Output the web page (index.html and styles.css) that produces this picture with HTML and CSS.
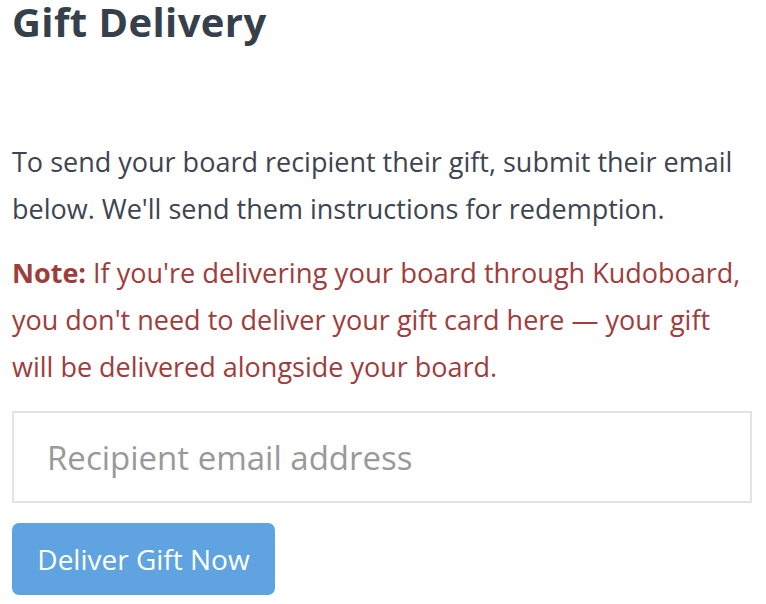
FILE: index.html
```html
<!DOCTYPE html>
<html>
<head>
<meta charset="utf-8">
<link rel="stylesheet" href="styles.css">
</head>
<body>
<div class="page">
  <h1 class="title">Gift Delivery</h1>
  <p class="intro">To send your board recipient their gift, submit their email<br>below. We'll send them instructions for redemption.</p>
  <p class="note"><strong>Note:</strong> If you're <span class="big">delivering your board</span> through Kudoboard,<br>you don't need to deliver your gift card here — your gift<br>will be delivered alongside your board.</p>
  <input class="email" type="email" placeholder="Recipient email address">
  <button class="btn">Deliver Gift Now</button>
</div>
</body>
</html>
```
FILE: styles.css
```css
html, body { margin: 0; padding: 0; background: #fff; }
body { font-family: "Open Sans", Lato, sans-serif; }
.page { padding: 0 12px; display: flex; flex-direction: column; align-items: flex-start; }
.title { margin: 0; font-size: 40px; font-weight: 700; letter-spacing: 0.4px; color: #36404b; line-height: 44px; }
.intro { margin: 94px 0 0; font-size: 27px; line-height: 47px; color: #3c4551; white-space: nowrap; }
.note { margin: 17px 0 0; font-size: 27px; line-height: 47px; color: #9e3d3b; white-space: nowrap; }
.note strong { font-weight: 700; }
.big { font-size: 27.5px; line-height: 1; }
.email { box-sizing: border-box; margin: 21px 0 0; width: 740px; height: 92px; border: 2px solid #e3e3e7; padding: 0 33px; font-family: inherit; font-size: 33px; color: #333; outline: none; }
.email::placeholder { color: #999; }
.btn { margin: 20px 0 0; height: 72px; width: 263px; border: none; border-radius: 7px; background: #5fa3e0; color: #fff; font-family: inherit; font-size: 28px; padding: 0; }
```
